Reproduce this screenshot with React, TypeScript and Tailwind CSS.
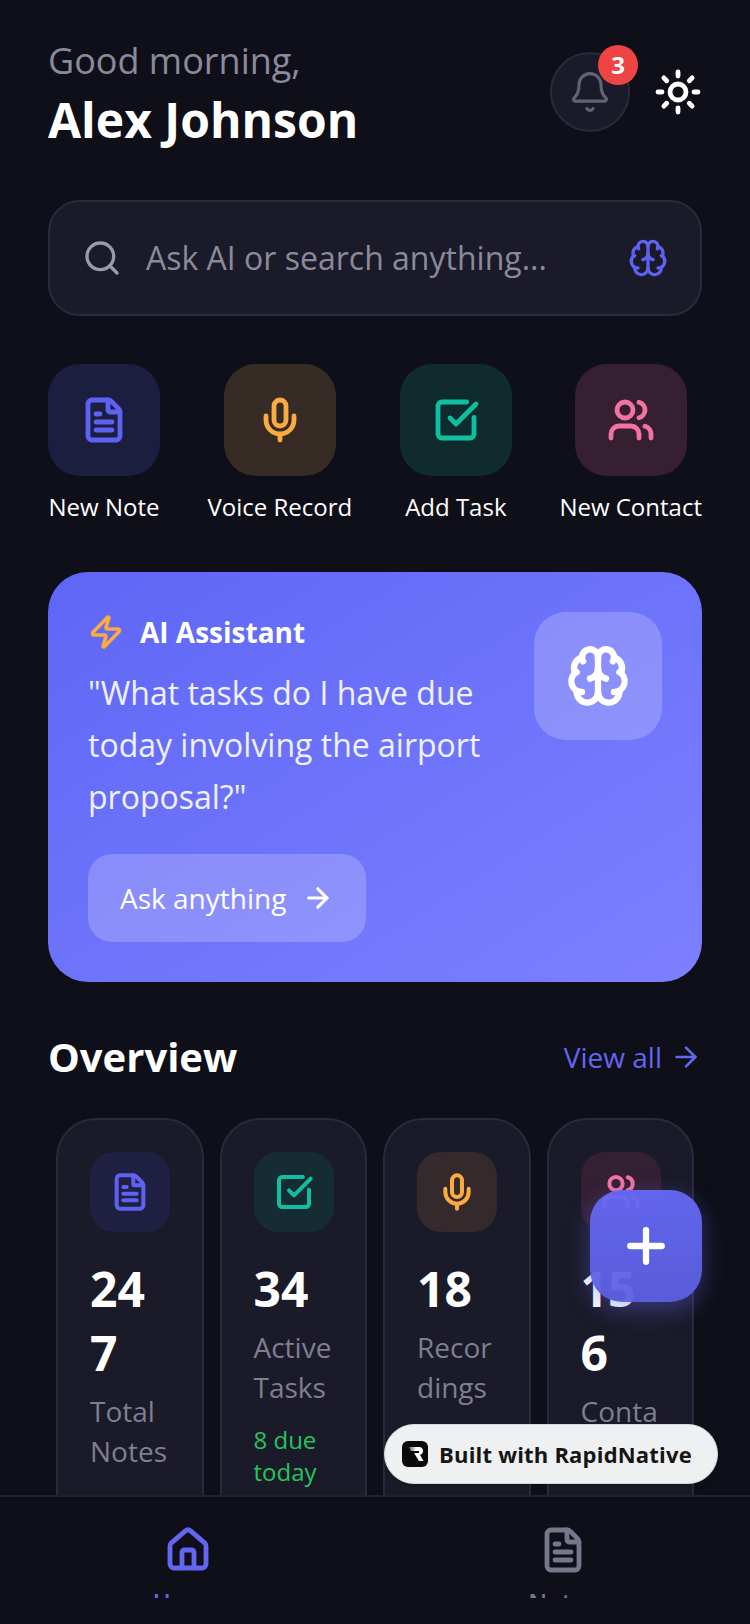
import { ArrowRight, Bell, Brain, FileText, House, Mic, Plus, Search, SquareCheckBig, Sun, Users, Zap } from 'lucide-react';

const quickActions = [
  { label: 'New Note', Icon: FileText, box: 'bg-[#1c1e40]', color: 'text-[#5e62f3]' },
  { label: 'Voice Record', Icon: Mic, box: 'bg-[#372b26]', color: 'text-[#fbab3f]' },
  { label: 'Add Task', Icon: SquareCheckBig, box: 'bg-[#0f2b2e]', color: 'text-[#10bfa0]' },
  { label: 'New Contact', Icon: Users, box: 'bg-[#351f30]', color: 'text-[#f472a0]' },
];

const stats = [
  { value: '247', label: 'Total Notes', Icon: FileText, box: 'bg-[#1f2042]', color: 'text-[#5e62f3]' },
  { value: '34', label: 'Active Tasks', sub: '8 due today', Icon: SquareCheckBig, box: 'bg-[#152c33]', color: 'text-[#10bfa0]' },
  { value: '18', label: 'Recordings', tag: true, Icon: Mic, box: 'bg-[#342a2b]', color: 'text-[#fbab3f]' },
  { value: '156', label: 'Contacts', Icon: Users, box: 'bg-[#342033]', color: 'text-[#f472a0]' },
];

function RapidLogo() {
  return (
    <svg width="26" height="26" viewBox="0 0 26 26">
      <defs>
        <linearGradient id="rapid" x1="0" y1="0" x2="1" y2="0">
          <stop offset="0" stopColor="#666666" />
          <stop offset="0.5" stopColor="#ffffff" />
        </linearGradient>
      </defs>
      <rect width="26" height="26" rx="6" fill="#0a0a0a" />
      <path d="M7 6h10c2.6 0 4 1.6 4 4 0 2-1 3.400-3 3.800l3.500 6.200h-4.500l-5-8h5v-2H9z" fill="url(#rapid)" />
    </svg>
  );
}

export default function App() {
  return (
    <div className="relative flex h-[1624px] w-[750px] flex-col overflow-hidden bg-[#0e0f18] font-['Open_Sans',sans-serif]">
      <div className="min-h-0 flex-1 overflow-hidden px-12 pt-[39px]">
        {/* Header */}
        <div className="flex items-start justify-between">
          <div>
            <div className="text-[36px] leading-[44px] text-[#8a8a9c]">Good morning,</div>
            <div className="mt-[7px] text-[48px] font-bold leading-[60px] text-white">Alex Johnson</div>
          </div>
          <div className="mt-[13px] flex items-center gap-6">
            <div className="relative flex h-20 w-20 items-center justify-center rounded-full border-2 border-[#2a2a3c] bg-[#1a1a28]">
              <Bell size={44} strokeWidth={1.7} className="text-[#626274]" />
              <div className="absolute -right-[10px] -top-[9px] flex h-10 w-10 items-center justify-center rounded-full bg-[#ef4444] text-[24px] font-bold text-white">3</div>
            </div>
            <Sun size={48} strokeWidth={2.4} className="text-white" />
          </div>
        </div>

        {/* Search */}
        <div className="mt-[50px] flex h-[116px] items-center rounded-[32px] border-2 border-[#2a2a3c] bg-[#1a1a28] px-8">
          <Search size={40} strokeWidth={2} className="text-[#9a9aa8]" />
          <div className="ml-6 flex-1 text-[32px] text-[#8a8a9c]">Ask AI or search anything...</div>
          <Brain size={40} strokeWidth={2} className="text-[#5e62f3]" />
        </div>

        {/* Quick actions */}
        <div className="mt-12 flex justify-between">
          {quickActions.map(({ label, Icon, box, color }) => (
            <div key={label} className="flex flex-col items-center">
              <div className={`flex h-28 w-28 items-center justify-center rounded-[32px] ${box}`}>
                <Icon size={48} strokeWidth={2.4} className={color} />
              </div>
              <div className="mt-[13px] text-[24px] leading-[36px] text-white">{label}</div>
            </div>
          ))}
        </div>

        {/* AI card */}
        <div className="mt-[47px] flex h-[410px] justify-between rounded-[40px] bg-gradient-to-br from-[#5f66f6] to-[#7c80ff] p-10">
          <div className="w-[420px]">
            <div className="flex items-center gap-4">
              <Zap size={36} strokeWidth={2.4} className="text-[#fbab3f]" />
              <div className="text-[28px] font-bold leading-10 text-white">AI Assistant</div>
            </div>
            <div className="mt-[15px] text-[32px] leading-[52px] text-white/90">"What tasks do I have due today involving the airport proposal?"</div>
            <div className="mt-[31px] flex h-[88px] w-[278px] items-center gap-4 rounded-3xl bg-white/20 px-8">
              <span className="whitespace-nowrap text-[28px] text-white">Ask anything</span>
              <ArrowRight size={32} strokeWidth={2.4} className="text-white" />
            </div>
          </div>
          <div className="flex h-32 w-32 items-center justify-center rounded-[32px] bg-white/20">
            <Brain size={64} strokeWidth={2.4} className="text-white" />
          </div>
        </div>

        {/* Overview */}
        <div className="mt-12 flex items-center justify-between">
          <div className="text-[40px] font-bold leading-[54px] text-white">Overview</div>
          <div className="flex items-center gap-2 text-[28px] text-[#6366f1]">
            View all
            <ArrowRight size={32} strokeWidth={2} />
          </div>
        </div>
        <div className="mt-[34px] flex gap-4 px-2">
          {stats.map(({ value, label, sub, tag, Icon, box, color }) => (
            <div key={label} className="min-w-0 flex-1 rounded-[40px] border-2 border-[#2a2a3c] bg-[#1a1a28] px-8 pb-32 pt-8">
              <div className={`flex h-20 w-20 items-center justify-center rounded-3xl ${box}`}>
                <Icon size={40} strokeWidth={2.4} className={color} />
              </div>
              <div className="mt-[25px] break-words text-[48px] font-bold leading-[64px] text-white">{value}</div>
              <div className="mt-[6px] break-words text-[28px] leading-10 text-[#7f7f92]">{label}</div>
              {sub && <div className="mt-[17px] text-[24px] leading-8 text-[#22c55e]">{sub}</div>}
              {tag && <div className="mt-[30px] h-[46px] w-[50px] rounded-lg bg-[#0f3a30]" />}
            </div>
          ))}
        </div>
      </div>

      {/* Bottom tabs */}
      <div className="relative z-10 flex h-[129px] shrink-0 overflow-hidden border-t-2 border-[#22222f] bg-[#0f0f1a]">
        <div className="flex flex-1 flex-col items-center pt-[29px]">
          <House size={48} strokeWidth={2.4} className="text-[#6366f1]" />
          <div className="mt-[14px] text-[24px] font-semibold leading-7 text-[#6366f1]">Home</div>
        </div>
        <div className="flex flex-1 flex-col items-center pt-[29px]">
          <FileText size={48} strokeWidth={2.4} className="text-[#77778a]" />
          <div className="mt-[14px] text-[24px] font-semibold leading-7 text-[#77778a]">Notes</div>
        </div>
        {/* labels are cut off in the reference */}
        <div className="absolute bottom-0 left-0 h-[26px] w-full bg-[#0f0f1a]" />
      </div>

      {/* Floating */}
      <div className="absolute left-[590px] top-[1190px] z-20 flex h-28 w-28 items-center justify-center rounded-[32px] bg-gradient-to-b from-[#6569f6]/95 to-[#5c60e2]/95 shadow-[0_8px_24px_rgba(99,102,241,0.4)]">
        <Plus size={54} strokeWidth={2.8} className="text-white" />
      </div>
      <div className="absolute left-[384px] top-[1424px] z-20 flex h-[60px] w-[334px] items-center gap-[11px] rounded-full border border-[#d8d8d8] bg-[#eff0f1] pl-[17px] shadow-md">
        <RapidLogo />
        <span className="text-[22px] font-bold tracking-[0.2px] text-[#151515]">Built with RapidNative</span>
      </div>
    </div>
  );
}
